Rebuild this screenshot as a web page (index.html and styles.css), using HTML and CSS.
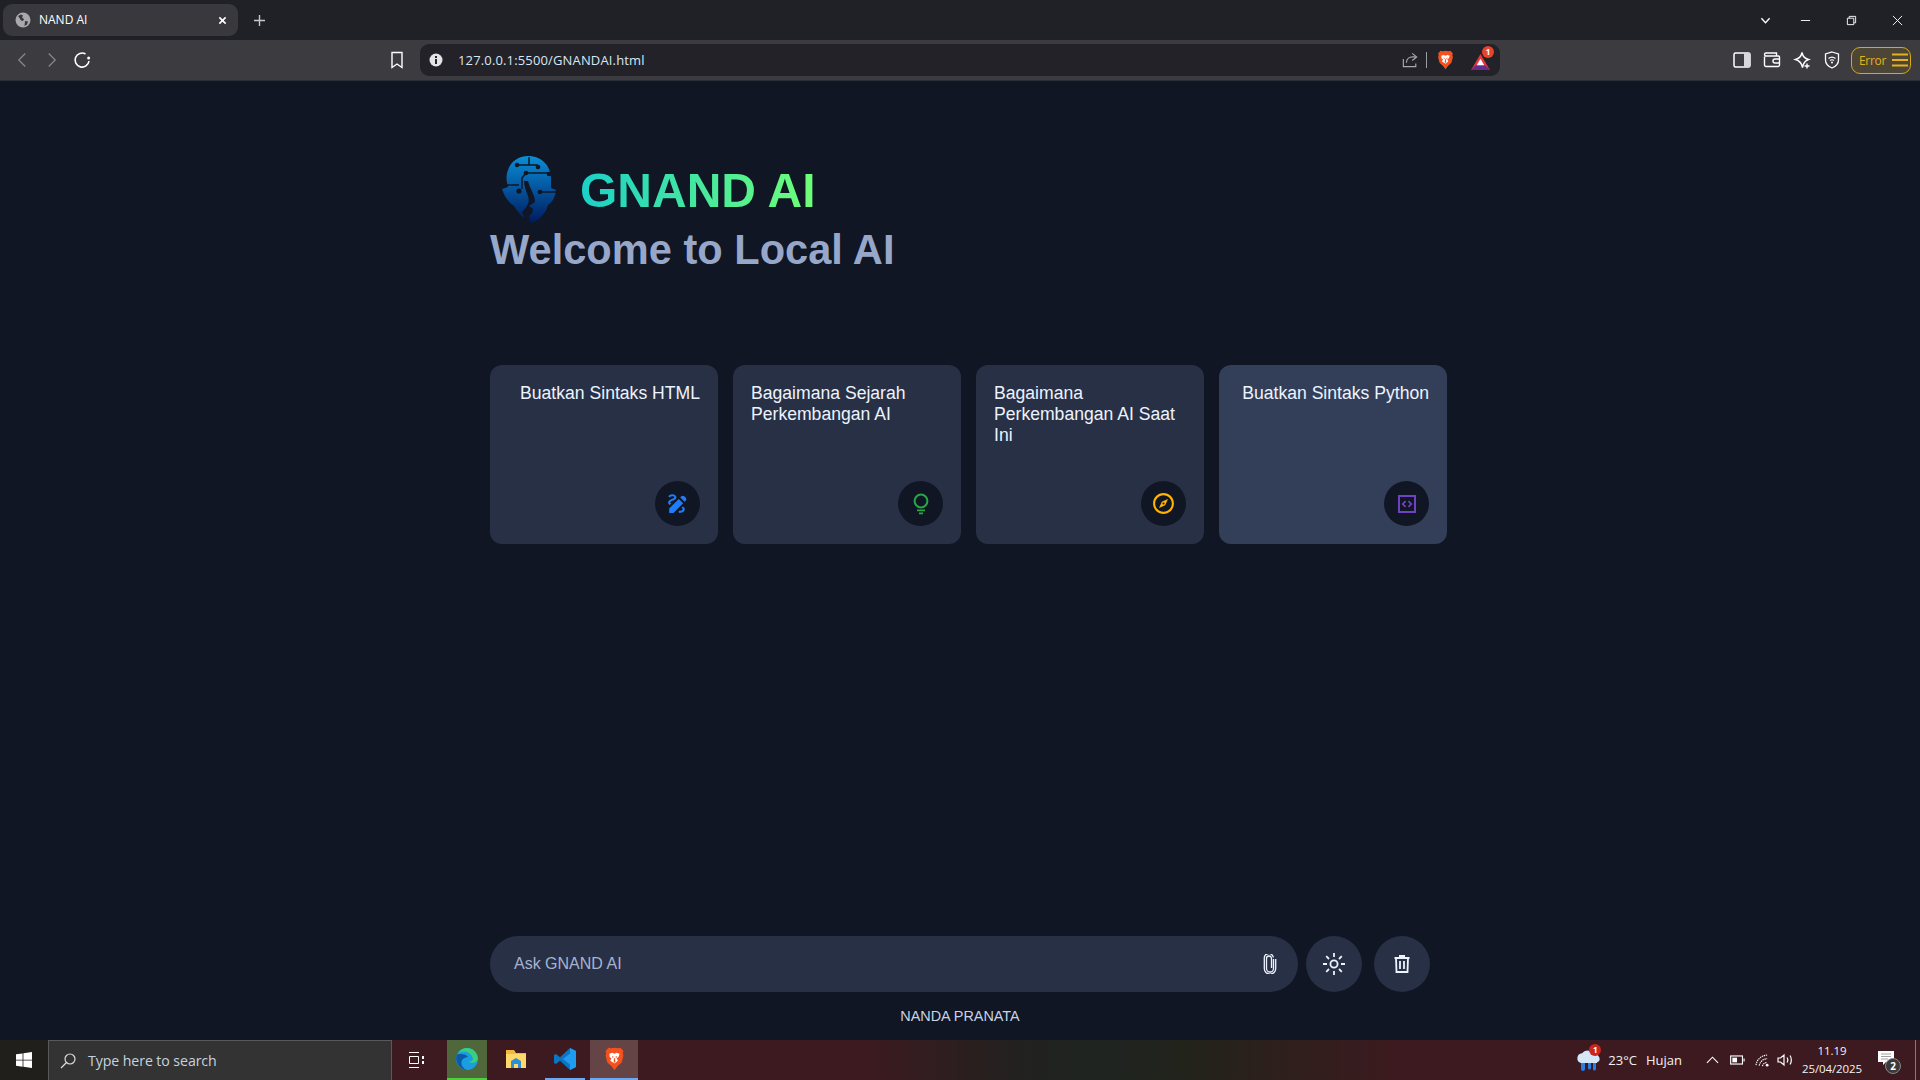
FILE: index.html
```html
<!DOCTYPE html>
<html lang="en">
<head>
<meta charset="utf-8">
<title>NAND AI</title>
<link rel="stylesheet" href="styles.css">
</head>
<body>
<svg class="defs" width="0" height="0" aria-hidden="true">
  <defs>
    <linearGradient id="headGrad" x1="0" y1="0" x2="0" y2="1">
      <stop offset="0" stop-color="#0a8fd6"/>
      <stop offset="0.5" stop-color="#04539c"/>
      <stop offset="1" stop-color="#011a5c"/>
    </linearGradient>
    <symbol id="brave" viewBox="0 0 24 28">
      <path fill="#f4511e" d="M12 1l4 .6 3-.6 3.6 4-1 1.6.8 3.4-2 8-5 4.600L12 27l-3.400-4.400-5-4.600-2-8 .8-3.400-1-1.600L5 1l3 .6z"/>
      <path fill="#fff" d="M6 8l3.500-1.200L12 8l2.500-1.200L18 8l-1.500 4-2 1 1.500 3-3.500 3h-1L7 16l1.500-3-2-1z"/>
      <path fill="#f4511e" d="M9 10.500l2 1-1 1.500zm6 0l-2 1 1 1.500zM11.300 13h1.400l.3 5h-2z"/>
    </symbol>
  </defs>
</svg>
<div class="screen">
  <header class="tabstrip">
    <div class="tab">
      <svg class="tab-globe" viewBox="0 0 16 16"><circle cx="8" cy="8" r="7.500" fill="#a8a8ad"/><path fill="#38383d" d="M3 4l3-1.500 2 1-1 2 2 1.500-1 2-2-.5-1.500-2.500zM10 9l3 .5-1 3-2.500 1.500z"/></svg>
      <span class="tab-title">NAND AI</span>
      <svg class="tab-close" viewBox="0 0 10 10"><path d="M1.500 1.500l7 7m0-7l-7 7"/></svg>
    </div>
    <svg class="tab-new" viewBox="0 0 12 12"><path d="M6 0v12M0 6h12"/></svg>
    <div class="window-controls">
      <svg class="win-ic caret" viewBox="0 0 12 12"><path d="M1.500 3.500L6 8.500l4.500-5"/></svg>
      <svg class="win-ic" viewBox="0 0 12 12"><path d="M1 6h10"/></svg>
      <svg class="win-ic" viewBox="0 0 12 12"><path d="M1.500 3.500h7v7h-7zM3.500 3.500v-2h7v7h-2"/></svg>
      <svg class="win-ic" viewBox="0 0 12 12"><path d="M1 1l10 10m0-10L1 11"/></svg>
    </div>
  </header>

  <nav class="toolbar">
    <svg class="nav-ic nav-dim" viewBox="0 0 14 18"><path d="M10 2L3 9l7 7"/></svg>
    <svg class="nav-ic nav-dim" viewBox="0 0 14 18"><path d="M4 2l7 7-7 7"/></svg>
    <svg class="nav-ic nav-reload" viewBox="0 0 18 18"><path d="M12.500 3A7 7 0 1 0 16 10"/><circle cx="15.600" cy="7" r="1.500" fill="#fff" stroke="none"/></svg>
    <svg class="nav-ic nav-mark" viewBox="0 0 14 18"><path d="M2 1.500h10v15l-5-3.500-5 3.500z"/></svg>
    <div class="urlbar">
      <svg class="url-info" viewBox="0 0 14 14"><circle cx="7" cy="7" r="6.500" fill="#e4e4e6"/><path d="M6 3h2v2H6zM6 6h2v5H6z" fill="#222228"/></svg>
      <span class="url-text">127.0.0.1:5500/GNANDAI.html</span>
      <svg class="url-share" viewBox="0 0 18 18"><path d="M1.500 8v8.500h14V13M5 12c0-4 3-6.500 7-6.500h3M11.500 1.500l5 4-5 4"/></svg>
      <span class="url-sep"></span>
      <svg class="url-brave"><use href="#brave"/></svg>
      <div class="url-bat">
        <svg class="bat-tri" viewBox="0 0 20 18"><path fill="#e0383e" d="M10 1L0 18h20z"/><path fill="#662d91" d="M0 18l5-5h10l5 5z"/><path fill="#fff" d="M10 6l-4 7h8z"/></svg>
        <span class="badge bat-badge">1</span>
      </div>
    </div>
    <div class="tool-right">
      <svg class="tool-ic" viewBox="0 0 18 18"><rect x="1" y="2" width="16" height="14" rx="1.500" fill="none" stroke="#fff" stroke-width="1.500"/><rect x="11" y="2" width="6" height="14" fill="#d8d8da"/></svg>
      <svg class="tool-ic" viewBox="0 0 18 18"><path fill="none" stroke="#fff" stroke-width="1.400" d="M1.500 5.500V14a1.500 1.500 0 0 0 1.500 1.500h12a1.500 1.500 0 0 0 1.500-1.500V6a1 1 0 0 0-1-1H3a1.500 1.500 0 0 1 0-3h10.500V5M16.500 8H12a2 2 0 0 0 0 4h4.500"/></svg>
      <svg class="tool-ic" viewBox="0 0 18 18"><path fill="none" stroke="#fff" stroke-width="1.400" d="M9 1.500c.8 4 2.500 6 6.500 7-3 1-5 2.500-6 8-1-5.500-3.500-7-7-8 4-1 5.700-3 6.500-7z"/><path stroke="#fff" stroke-width="1.400" d="M14 12.500v5M11.500 15h5"/></svg>
      <svg class="tool-ic" viewBox="0 0 18 18"><path fill="none" stroke="#fff" stroke-width="1.300" d="M9 1l6.500 2v6c0 4-3 6.500-6.500 8-3.500-1.500-6.500-4-6.500-8V3z"/><path fill="none" stroke="#fff" stroke-width="1.100" d="M5.500 7.500c2-1.600 5-1.600 7 0M7 9.500c1.200-.9 2.800-.9 4 0"/><circle cx="9" cy="11.500" r="1" fill="#fff"/></svg>
      <div class="error-btn">
        <span class="error-text">Error</span>
        <svg class="error-menu" viewBox="0 0 16 14"><path d="M0 1.500h16M0 7h16M0 12.500h16"/></svg>
      </div>
    </div>
  </nav>

  <main class="page">
    <div class="content">
      <div class="brand">
        <svg class="logo" viewBox="0 0 54 67">
          <path fill="url(#headGrad)" d="M26 0c14 0 23 10 23 23v9l5 2c-1 9-5 13-8 15-2 8-9 16-17 18-3-1-12-8-17-17-3-2-9-7-12-17l6-2C4 24 4 19 6 14 9 5 17 0 26 0z"/>
          <g fill="none" stroke="#101623" stroke-width="1.500">
            <path d="M15 9h21M27 1v8"/>
            <path d="M24 17h23M24 17l-4 5v11"/>
            <path d="M2 29h15"/>
            <path d="M38 36h16"/>
          </g>
          <g fill="#101623">
            <circle cx="15" cy="9" r="2.300"/><circle cx="36" cy="11" r="2.300"/>
            <circle cx="47" cy="18" r="2.300"/><circle cx="24" cy="17" r="2.300"/>
            <circle cx="38" cy="36" r="2.300"/>
            <circle cx="17" cy="35" r="2.600"/>
            <path d="M22 25h4c2 8 7 14 7 21l-6 4 4 3-1 4-3 3 1 6h-4l-4-10c6-6 8-10 6-16-2-5-4-10-4-15z"/>
          </g>
        </svg>
        <h1 class="brand-name">GNAND AI</h1>
      </div>
      <h2 class="welcome">Welcome to Local AI</h2>

      <ul class="cards">
        <li class="card">
          <p class="card-text">Buatkan Sintaks HTML</p>
          <span class="card-icon"><svg class="ci ci-blue" viewBox="0 0 24 24"><path d="M18.850 10.390l1.060-1.060c.78-.78.78-2.050 0-2.830L18.500 5.090c-.78-.78-2.050-.78-2.830 0l-1.060 1.060 4.240 4.240zm-5.660-2.830L4 16.760V21h4.240l9.190-9.190-4.240-4.250zM19 17.500c0 2.190-2.540 3.500-5 3.500-.55 0-1-.45-1-1s.45-1 1-1c1.540 0 3-.73 3-1.500 0-.47-.48-.87-1.230-1.200l1.480-1.480c1.070.63 1.750 1.470 1.750 2.680zM4.580 13.350C3.610 12.790 3 12.060 3 11c0-1.800 1.890-2.630 3.560-3.360C7.590 7.180 9 6.560 9 6c0-.41-.78-1-2-1-1.260 0-1.800.61-1.830.64-.35.41-.98.46-1.400.12-.41-.34-.49-.95-.15-1.380C3.730 4.240 4.760 3 7 3s4 1.320 4 3c0 1.870-1.930 2.720-3.640 3.470C6.420 9.880 5 10.500 5 11c0 .31.43.6 1.070.86l-1.490 1.490z"/></svg></span>
        </li>
        <li class="card">
          <p class="card-text">Bagaimana Sejarah Perkembangan AI</p>
          <span class="card-icon"><svg class="ci ci-green" viewBox="0 0 24 24"><circle cx="12" cy="9" r="6.400" fill="none" stroke="#28a745" stroke-width="2"/><path d="M8 17.500h8v1.700H8zM10 20.600h4v1.700h-4z"/></svg></span>
        </li>
        <li class="card">
          <p class="card-text">Bagaimana Perkembangan AI Saat Ini</p>
          <span class="card-icon"><svg class="ci ci-yellow" viewBox="0 0 24 24"><path fill-rule="evenodd" d="M12 2C6.480 2 2 6.480 2 12s4.480 10 10 10 10-4.480 10-10S17.520 2 12 2zm0 18c-4.410 0-8-3.590-8-8s3.590-8 8-8 8 3.590 8 8-3.590 8-8 8zM7.700 16.300l2.700-5.900 5.900-2.700-2.700 5.900zM12 11a1 1 0 1 0 0 2 1 1 0 0 0 0-2z"/></svg></span>
        </li>
        <li class="card card-hover">
          <p class="card-text">Buatkan Sintaks Python</p>
          <span class="card-icon"><svg class="ci ci-purple" viewBox="0 0 24 24"><path d="M3 3h18v18H3zm2 2v14h14V5zM10 8.500l1.200 1.200L8.900 12l2.300 2.300-1.200 1.200L6.500 12zM14 8.500l3.500 3.500-3.500 3.500-1.200-1.200 2.300-2.300-2.300-2.300z" fill-rule="evenodd"/></svg></span>
        </li>
      </ul>

      <div class="composer">
        <div class="prompt">
          <span class="prompt-text">Ask GNAND AI</span>
          <svg class="round-ic prompt-clip" viewBox="0 0 14 20"><path d="M10.500 5v9.500a3.500 3.500 0 0 1-7 0V4.500a2.500 2.500 0 0 1 5 0V14"/><path d="M12.700 5v9.500a5.700 5.700 0 0 1-11.400 0V4.500a4.500 4.500 0 0 1 9-1"/></svg>
        </div>
        <button class="round-btn" type="button"><svg class="round-ic sun" viewBox="0 0 22 22"><circle cx="11" cy="11" r="3.600"/><path d="M11 0v4M11 18v4M0 11h4M18 11h4M3.200 3.200L6 6M16 16l2.800 2.800M3.200 18.800L6 16M16 6l2.800-2.800"/></svg></button>
        <button class="round-btn" type="button"><svg class="round-ic trash" viewBox="0 0 16 18"><path d="M.500 3h15M2 3l.500 14h11L14 3M5 1h6M6 6v8M10 6v8"/></svg></button>
      </div>
    </div>
    <p class="credit">NANDA PRANATA</p>
  </main>

  <footer class="taskbar">
    <div class="start"><svg class="start-ic" viewBox="0 0 16 16"><path fill="#fff" d="M0 2.300l6.600-.9v6.300H0zM7.400 1.300L16 0v7.700H7.400zM0 8.400h6.600v6.300L0 13.800zM7.400 8.400H16V16l-8.600-1.200z"/></svg></div>
    <div class="search">
      <svg class="search-ic" viewBox="0 0 16 16"><circle cx="10" cy="6" r="5" fill="none"/><path d="M6.500 9.500L1 15"/></svg>
      <span class="search-text">Type here to search</span>
    </div>
    <svg class="task-view" viewBox="0 0 16 16"><path d="M1 .5h10M1 15.500h10M1.500 4.500h9v7h-9z" fill="none"/><path d="M14 4h2v3h-2zM14 9h2v3h-2z" fill="#fff" stroke="none"/></svg>
    <div class="task-app task-edge">
      <svg class="app-ic" viewBox="0 0 24 24"><circle cx="12" cy="12" r="11" fill="#1b9de2"/><path fill="#3ad07a" d="M23 12a11 11 0 0 0-21-4.500C5 3 16 3 18 12c0 2-3 3-5 3 3 1 8 2 10-3z"/><path fill="#0c59a4" d="M2 7.500C-1 15 5 23 12 23c-6-2-7-8-4-11 1-1 3-2 5-2-3-4-9-3-11-2.500z"/></svg>
    </div>
    <div class="task-app">
      <svg class="app-ic" viewBox="0 0 24 24"><path fill="#f6b73c" d="M2 3h8l2 3h10v15H2z"/><path fill="#ffd868" d="M2 7h20v14H2z"/><path fill="#2a8fd6" d="M7 21v-7l5-3 5 3v7h-3v-4h-4v4z"/></svg>
    </div>
    <div class="task-app task-active">
      <svg class="app-ic" viewBox="0 0 24 24"><path fill="#0a75c2" d="M17 1l6 3v16l-6 3L7 13.800 3 17l-2-1V8l2-1 4 3.200z"/><path fill="#1f9cf0" d="M17 1l6 3v16l-6 3zM17 6.500L10 12l7 5.500z"/></svg>
    </div>
    <div class="task-app task-current">
      <svg class="app-ic"><use href="#brave"/></svg>
    </div>
    <div class="tray">
      <div class="weather">
        <svg class="weather-ic" viewBox="0 0 26 24"><path fill="#d4e6f8" d="M6 15a5 5 0 0 1 1-9.800A7 7 0 0 1 19 7a4 4 0 0 1 3 7.500V15z"/><path fill="#2a7de1" d="M6 15h4v6a2 2 0 0 1-4 0zM13 15h3v5a1.500 1.500 0 0 1-3 0zM18 15h3v6a1.500 1.500 0 0 1-3 0z"/></svg>
        <span class="badge weather-badge">1</span>
      </div>
      <span class="tray-text temp">23°C</span>
      <span class="tray-text cond">Hujan</span>
      <svg class="tray-ic chev" viewBox="0 0 14 8"><path d="M1 7l6-6 6 6"/></svg>
      <svg class="tray-ic batt" viewBox="0 0 16 10"><rect x=".7" y=".7" width="12.600" height="8.600"/><rect x="2.500" y="2.500" width="5" height="5" fill="#fff" stroke="none"/><path d="M15 3.500v3"/></svg>
      <svg class="tray-ic wifi" viewBox="0 0 16 14"><path d="M1 12C2 6 6 2 13 1M4.500 12.500C5 9 8 5.500 13 5M8 13c.3-2 2-3.500 5-4" stroke-dasharray="1.500 .8"/><circle cx="13" cy="12" r="1.500" fill="#fff" stroke="none"/></svg>
      <svg class="tray-ic vol" viewBox="0 0 16 14"><path d="M1 5v4h2.500L7 12V2L3.500 5zM10 4.500c1 1.500 1 3.500 0 5M13 2.500c1.800 2.500 1.800 6.500 0 9" /></svg>
      <div class="clock"><span>11.19</span><span>25/04/2025</span></div>
      <div class="notif">
        <svg class="notif-ic" viewBox="0 0 16 14"><path fill="#fff" d="M0 0h16v11H8l-3 3v-3H0z"/><path d="M3 3h10M3 5.500h10M3 8h7" stroke="#888" stroke-width=".8"/></svg>
        <span class="notif-count">2</span>
      </div>
      <span class="show-desktop"></span>
    </div>
  </footer>
</div>
</body>
</html>
```

FILE: styles.css
```css
* { box-sizing: border-box; }
html, body { margin: 0; padding: 0; overflow: hidden; background: #101623; }
.defs { position: absolute; }
.screen {
  width: 1920px; height: 1080px;
  display: flex; flex-direction: column;
  font-family: "Liberation Sans", Arial, sans-serif;
}
svg { display: block; flex: none; }

/* browser chrome */
.tabstrip {
  height: 40px; flex: none; background: #202027;
  display: flex; align-items: center; padding-left: 3px;
  font-family: "Open Sans", "Noto Sans", sans-serif;
}
.tab {
  width: 235px; height: 32px; border-radius: 9px;
  background: #38383d; display: flex; align-items: center; padding-left: 12px;
}
.tab-globe { width: 16px; height: 16px; }
.tab-title { color: #fff; font-size: 12px; margin-left: 8px; flex: 1; padding-bottom: 2px; }
.tab-close { width: 9px; height: 9px; margin-right: 11px; fill: none; stroke: #fff; stroke-width: 1.8; }
.tab-new { width: 11px; height: 11px; margin-left: 16px; fill: none; stroke: #c8c8cc; stroke-width: 1.500; }
.window-controls { margin-left: auto; display: flex; align-items: center; gap: 35px; padding-right: 17px; }
.win-ic { width: 11px; height: 11px; fill: none; stroke: #fff; stroke-width: 1; }
.caret { stroke-width: 1.500; margin-right: -6px; }

.toolbar {
  height: 41px; flex: none; background: #3b3b40;
  display: flex; align-items: center; padding-left: 16px;
  border-bottom: 1px solid #2c2e38;
  font-family: "Open Sans", "Noto Sans", sans-serif;
}
.nav-ic { fill: none; stroke: #fff; stroke-width: 1.400; }
.nav-dim { width: 13px; height: 18px; stroke: #85858a; margin-right: 16px; }
.nav-reload { width: 18px; height: 18px; margin-left: -1px; stroke-width: 1.600; }
.nav-mark { width: 14px; height: 18px; margin-left: 299px; }
.urlbar {
  width: 1080px; height: 32px; margin-left: 16px; border-radius: 9px;
  background: #222228; display: flex; align-items: center; padding-left: 9px;
}
.url-info { width: 14px; height: 14px; }
.url-text { color: #d9e6f5; font-size: 13px; margin-left: 15px; flex: 1; letter-spacing: .15px; }
.url-share { width: 16px; height: 16px; fill: none; stroke: #a8a8ad; stroke-width: 1.300; }
.url-sep { width: 1px; height: 16px; background: #9a9a9f; margin-left: 8px; }
.url-brave { width: 17px; height: 20px; margin-left: 10px; }
.url-bat { position: relative; width: 19px; height: 18px; margin-left: 17px; margin-right: 10px; }
.bat-tri { width: 19px; height: 17px; margin-top: 2px; }
.badge {
  position: absolute; border-radius: 50%; background: #e8432c; color: #fff;
  font-family: "Open Sans", sans-serif; font-weight: 700; text-align: center;
}
.bat-badge { width: 12px; height: 12px; font-size: 8px; line-height: 12px; top: -5px; right: -4px; }
.tool-right { margin-left: auto; display: flex; align-items: center; padding-right: 9px; }
.tool-ic { width: 18px; height: 18px; margin-right: 12px; }
.error-btn {
  width: 60px; height: 27px; margin-left: -2px; border-radius: 9px;
  border: 1px solid #d9a90f; background: #4d4636;
  display: flex; align-items: center; padding-left: 7px;
}
.error-text { color: #e3b21c; font-size: 12px; letter-spacing: -.3px; }
.error-menu { width: 16px; height: 14px; margin-left: 6px; fill: none; stroke: #e3b21c; stroke-width: 1.800; }

/* page */
.page {
  flex: 1; min-height: 0; background: #101623;
  display: flex; flex-direction: column; align-items: center;
}
.content {
  width: 940px; flex: 1; display: flex; flex-direction: column;
  padding-top: 74px;
}
.brand { display: flex; align-items: center; padding-left: 12px; height: 68px; }
.logo { width: 54px; height: 67px; }
.brand-name {
  margin: 3px 0 0 24px; font-size: 48px; font-weight: 700; line-height: 56px;
  background: linear-gradient(to right, #1bd0c8, #70ff76);
  -webkit-background-clip: text; background-clip: text; color: transparent;
}
.welcome { margin: 3px 0 0; font-size: 41.6px; font-weight: 700; line-height: 48px; color: #97a7ca; }
.cards { list-style: none; margin: 91px 0 0; padding: 0; display: flex; gap: 15px; }
.card {
  width: 228px; height: 179px; flex: none; padding: 18px; border-radius: 12px;
  background: #283045; display: flex; flex-direction: column;
  justify-content: space-between; align-items: flex-end;
}
.card-hover { background: #333e58; }
.card-text { margin: 0; font-size: 17.6px; line-height: 21px; color: #edf3ff; }
.card-icon {
  width: 45px; height: 45px; border-radius: 50%; background: #101623;
  display: flex; align-items: center; justify-content: center;
}
.ci { width: 24px; height: 24px; fill: currentColor; }
.ci-blue { color: #1d7efd; width: 25px; height: 25px; }
.ci-green { color: #28a745; }
.ci-yellow { color: #ffb400; width: 25px; height: 25px; }
.ci-purple { color: #6f42c1; }

.composer { margin-top: auto; display: flex; align-items: center; gap: 8px; }
.prompt {
  width: 808px; height: 56px; border-radius: 28px; background: #283045;
  display: flex; align-items: center; padding: 0 21px 0 24px;
}
.prompt-text { flex: 1; color: #a5b3d1; font-size: 16px; }
.round-btn {
  width: 56px; height: 56px; border-radius: 50%; border: 0; padding: 0;
  background: #283045; display: flex; align-items: center; justify-content: center;
}
.round-btn + .round-btn { margin-left: 4px; }
.round-ic { fill: none; stroke: #edf3ff; stroke-width: 1.800; }
.prompt-clip { width: 14px; height: 20px; stroke-width: 1.300; }
.sun { width: 22px; height: 22px; }
.trash { width: 16px; height: 18px; }
.credit {
  flex: none; margin: 0; height: 48px; line-height: 48px;
  font-size: 14.4px; color: #c8d3e6; text-align: center;
}

/* taskbar */
.taskbar {
  height: 40px; flex: none; display: flex; align-items: center;
  background: linear-gradient(to right, #3d1a1f 0, #3d1a1f 45%, #22211f 53%, #1f2421 57%, #22231b 62%, #3d1a1f 73%, #3d1a20 100%);
  font-family: "Open Sans", "Noto Sans", sans-serif; color: #fff;
}
.start { width: 48px; height: 40px; background: #201f1c; display: flex; align-items: center; justify-content: center; }
.start-ic { width: 16px; height: 16px; }
.search {
  width: 344px; height: 40px; background: #333; border: 1px solid #595959; border-bottom: 0;
  display: flex; align-items: center; padding-left: 11px;
}
.search-ic { width: 16px; height: 16px; fill: none; stroke: #dcdcdc; stroke-width: 1.200; }
.search-text { color: #c6d2de; font-size: 14.2px; margin-left: 12px; letter-spacing: -.1px; }
.task-view { width: 16px; height: 16px; margin-left: 16px; margin-right: 23px; fill: none; stroke: #fff; stroke-width: 1; }
.task-app {
  width: 40px; height: 40px; display: flex; align-items: center; justify-content: center;
  margin-right: 9px; border-bottom: 2px solid transparent;
}
.task-edge { background: #4f673a; border-bottom-color: #4cd13a; }
.task-active { border-bottom-color: #6aa9f2; }
.task-current { width: 48px; margin-left: -4px; margin-right: 0; background: #654445; border-bottom-color: #6aa9f2; }
.app-ic { width: 24px; height: 24px; }
.task-current .app-ic { width: 21px; height: 24px; }
.tray { margin-left: auto; display: flex; align-items: center; height: 40px; }
.weather { position: relative; width: 26px; height: 24px; margin-right: 7px; }
.weather-ic { width: 26px; height: 24px; }
.weather-badge { width: 12px; height: 12px; font-size: 8px; line-height: 12px; background: #c9261f; top: -4px; right: 0; }
.tray-text { font-size: 13px; color: #f2f2f2; }
.cond { margin-left: 9px; }
.tray-ic { fill: none; stroke: #fff; stroke-width: 1.200; }
.chev { width: 13px; height: 8px; margin-left: 24px; }
.batt { width: 15px; height: 10px; margin-left: 11px; }
.wifi { width: 15px; height: 13px; margin-left: 10px; }
.vol { width: 16px; height: 14px; margin-left: 7px; }
.clock {
  width: 76px; margin-left: 1px; display: flex; flex-direction: column; align-items: center;
  font-size: 11.500px; line-height: 18px; color: #f2f2f2; letter-spacing: -.1px;
}
.notif { position: relative; width: 26px; height: 30px; margin-left: 8px; }
.notif-ic { width: 16px; height: 14px; margin-top: 6px; }
.notif-count {
  position: absolute; left: 7px; top: 13px; width: 16px; height: 16px; border-radius: 50%;
  background: #3a3a3a; border: 1px solid #888; color: #fff; font-size: 10px; font-weight: 700;
  line-height: 14px; text-align: center;
}
.show-desktop { width: 1px; height: 40px; background: #8a7a7c; margin-left: 11px; margin-right: 4px; }
```
